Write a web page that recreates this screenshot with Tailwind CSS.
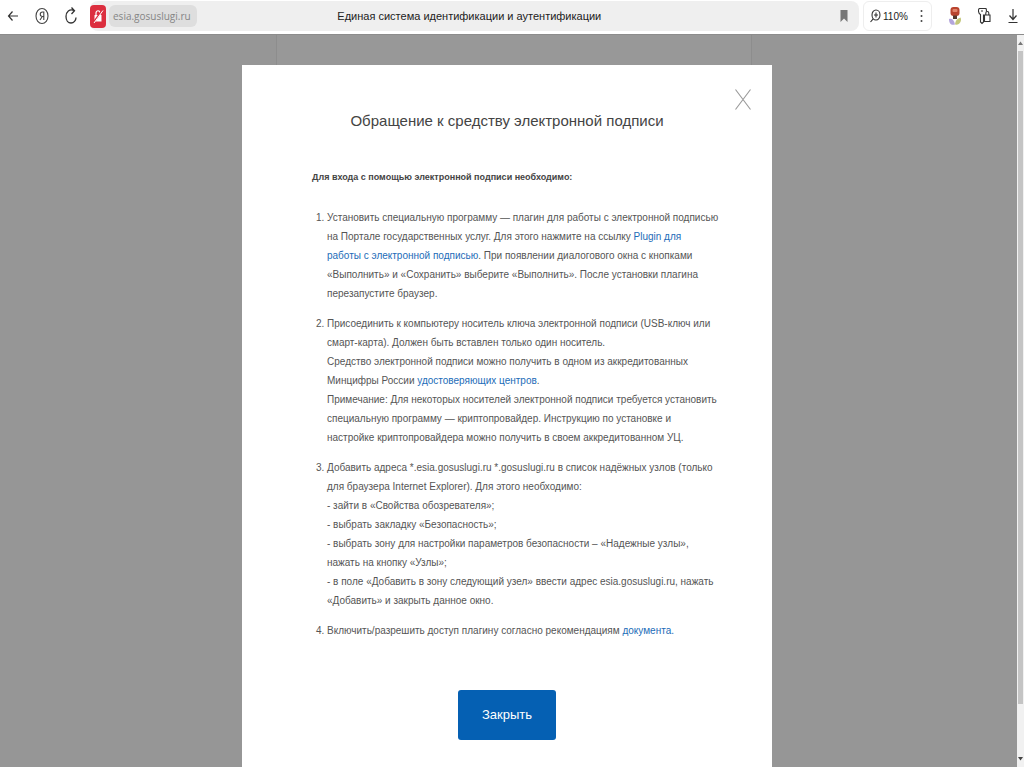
<!DOCTYPE html>
<html lang="ru">
<head>
    <meta charset="UTF-8">
    <meta name="viewport" content="width=device-width, initial-scale=1.0">
    <title>Единая система идентификации и аутентификации</title>
    <script src="https://cdn.jsdelivr.net/npm/@tailwindcss/browser@4"></script>
</head>

<body class="min-h-screen flex flex-col bg-[#969696] font-['Liberation_Sans',sans-serif] text-[#555]">
    <!-- browser toolbar -->
    <header class="flex items-center h-[34px] pb-[2px] bg-white text-[#222]">
        <button aria-label="Назад" class="ml-[7px] w-3">
            <svg class="w-3 h-4" viewBox="0 0 12 16" fill="none" stroke="#333" stroke-width="1.2"><path d="M11 8H1.500M5.500 3.500L1.500 8l4 4.500"/></svg>
        </button>
        <button aria-label="Яндекс" class="ml-4 w-[14px]">
            <svg class="w-[14px] h-[18px]" viewBox="0 0 14 18" fill="none" stroke="#444" stroke-width="1.100"><ellipse cx="7" cy="9" rx="6" ry="7.500"/><path d="M8.800 13V5H7.500C4.500 5 4.500 9.500 7.500 9.500H8.800M7.300 9.500L5 13"/></svg>
        </button>
        <button aria-label="Обновить" class="ml-4 w-3">
            <svg class="w-3 h-[18px]" viewBox="0 0 12 18" fill="none" stroke="#333" stroke-width="1.300"><path d="M9 3.500C4.500 1.500 1 5 1 9.500c0 4 2.200 6.500 5 6.500s5-2.500 5-5.500M6.500 .500L9.500 3.700 6.500 7"/></svg>
        </button>
        <div class="ml-[13px] flex flex-1 items-center h-[30px] bg-[#efefef] rounded-lg">
            <button aria-label="Соединение не защищено" class="w-4 h-[23px] flex items-center justify-center rounded bg-[#dc2f3f]">
                <svg class="w-3 h-4" viewBox="0 0 12 16"><path d="M2.500 7h7v6.500h-7z" fill="#fff"/><path d="M4 7V5c0-3 4-3 4 0v2" fill="none" stroke="#fff" stroke-width="1.200"/><path d="M1.500 14.500L10.500 2" stroke="#dc2f3f" stroke-width="2"/><path d="M2 15L11 2.500" stroke="#fff"/></svg>
            </button>
            <a href="#" class="ml-[3px] pl-1 pr-[6px] h-[22px] leading-[22px] rounded-md bg-[#dedede] text-[#858585] text-[10px] font-['Open_Sans',sans-serif]">esia.gosuslugi.ru</a>
            <h1 class="flex-1 text-center whitespace-nowrap pr-[98px] text-[11px]">Единая система идентификации и аутентификации</h1>
            <button aria-label="Закладка" class="mr-[11px] w-2">
                <svg class="w-2 h-3" viewBox="0 0 8 12"><path d="M0.500 0h7v12L4 8.500.500 12z" fill="#777"/></svg>
            </button>
        </div>
        <div class="ml-1 flex items-center h-[30px] w-[69px] border border-[#eee] rounded-md">
            <button class="ml-[6px] flex items-center gap-[2px] text-[10px]">
                <svg class="w-[11px] h-[14px]" viewBox="0 0 11 14" fill="none" stroke="#333" stroke-width="1.100"><ellipse cx="6" cy="6" rx="4" ry="5"/><path d="M3.200 9.800L.500 13M4 6h4M6 3.500v5"/></svg>
                110%
            </button>
            <button aria-label="Меню страницы" class="ml-auto mr-[8px] w-[3px]">
                <svg class="w-[3px] h-[14px]" viewBox="0 0 3 14" fill="#444"><circle cx="1.500" cy="2" r="1"/><circle cx="1.500" cy="7" r="1"/><circle cx="1.500" cy="12" r="1"/></svg>
            </button>
        </div>
        <button aria-label="Расширение" class="ml-4 w-[14px]">
            <svg class="w-[14px] h-5" viewBox="0 0 14 20"><path d="M7 18.500C2 20 1 16 1 13c3-1 5 1 6 5.500z" fill="#b3a5dc"/><path d="M7 18.500c5 1 7-4 5.500-7-3 1-5 2.500-5.500 7z" fill="#c3c77b"/><rect x="2.500" y="1" width="9" height="9" rx="3" fill="#b9432d"/><rect x="4.500" y="3" width="5" height="3" rx="1" fill="#e1846b"/><path d="M5 9.500h4V13H5z" fill="#54392d"/></svg>
        </button>
        <button aria-label="Пароли" class="ml-4 w-[13px]">
            <svg class="w-[13px] h-[18px]" viewBox="0 0 13 18" fill="none" stroke="#333" stroke-width="1.100"><path d="M6 8H5.500V15L4 16.500 2.500 15V7.500C0 6.500 0 2 1.500 1.500h6.500C8.500 2.500 8.500 3 8.500 4.500M3 4h2"/><path d="M6.500 8h5.500v6.500H6.500zM7.800 8V6c0-2 3-2 3 0v2"/></svg>
        </button>
        <button aria-label="Загрузки" class="ml-[17px] mr-[6px] w-[10px]">
            <svg class="w-[10px] h-4" viewBox="0 0 10 16" fill="none" stroke="#333" stroke-width="1.200"><path d="M5 1v10M1.500 7.500L5 11.500l3.500-4M.500 14.500h9"/></svg>
        </button>
    </header>

    <div class="flex flex-1 border-t border-[#8c8c8c]">
        <main class="relative flex flex-1 justify-center pt-[30px] pr-[3px]">
            <!-- page behind the dialog -->
            <div class="absolute inset-y-0 left-[276px] right-[265px] border-x border-[#8d8d8d] bg-[#989898]"></div>

            <section role="dialog" aria-labelledby="title" class="relative w-[530px] max-w-full bg-white px-[70px] pt-[42px] pb-[26px]">
                <button aria-label="Закрыть окно" class="absolute top-6 right-[21px]">
                    <svg class="w-4 h-[21px]" viewBox="0 0 16 21" fill="none" stroke="#999" stroke-width="1.100"><path d="M.500.500l15 20M15.500.500l-15 20"/></svg>
                </button>
                <h2 id="title" class="text-center whitespace-nowrap text-[15px] leading-7 text-[#444]">Обращение к средству электронной подписи</h2>
                <p class="mt-[33px] text-[9px] leading-[19px] font-bold text-[#444]">Для входа с помощью электронной подписи необходимо:</p>

                <ol class="mt-[21px] pl-[15px] list-decimal space-y-[11px] whitespace-nowrap text-[10px] leading-[19px]">
                    <li>Установить специальную программу — плагин для работы с электронной подписью<br>
                        на Портале государственных услуг. Для этого нажмите на ссылку <a href="#" class="text-[#1c6cb8]">Plugin для<br>
                        работы с электронной подписью</a>. При появлении диалогового окна с кнопками<br>
                        «Выполнить» и «Сохранить» выберите «Выполнить». После установки плагина<br>
                        перезапустите браузер.</li>
                    <li>Присоединить к компьютеру носитель ключа электронной подписи (USB-ключ или<br>
                        смарт-карта). Должен быть вставлен только один носитель.<br>
                        Средство электронной подписи можно получить в одном из аккредитованных<br>
                        Минцифры России <a href="#" class="text-[#1c6cb8]">удостоверяющих центров</a>.<br>
                        Примечание: Для некоторых носителей электронной подписи требуется установить<br>
                        специальную программу — криптопровайдер. Инструкцию по установке и<br>
                        настройке криптопровайдера можно получить в своем аккредитованном УЦ.</li>
                    <li>Добавить адреса *.esia.gosuslugi.ru *.gosuslugi.ru в список надёжных узлов (только<br>
                        для браузера Internet Explorer). Для этого необходимо:<br>
                        - зайти в «Свойства обозревателя»;<br>
                        - выбрать закладку «Безопасность»;<br>
                        - выбрать зону для настройки параметров безопасности – «Надежные узлы»,<br>
                        нажать на кнопку «Узлы»;<br>
                        - в поле «Добавить в зону следующий узел» ввести адрес esia.gosuslugi.ru, нажать<br>
                        «Добавить» и закрыть данное окно.</li>
                    <li>Включить/разрешить доступ плагину согласно рекомендациям <a href="#" class="text-[#1c6cb8]">документа.</a></li>
                </ol>

                <button class="block mx-auto mt-[50px] w-[98px] h-[50px] rounded-[3px] bg-[#0560b3] text-white text-[13px]">Закрыть</button>
            </section>
        </main>

        <!-- scrollbar -->
        <div class="flex flex-col items-center w-[7px] bg-[#f1f1f1]">
            <svg class="w-[5px] h-4" viewBox="0 0 5 16"><path d="M0 10h5L2.500 6.500z" fill="#777"/></svg>
            <div class="w-[5px] flex-[654] bg-[#c4c4c4]"></div>
            <div class="flex-[47]"></div>
            <svg class="w-[5px] h-4" viewBox="0 0 5 16"><path d="M0 6h5L2.500 9.500z" fill="#444"/></svg>
        </div>
    </div>
</body>
</html>
